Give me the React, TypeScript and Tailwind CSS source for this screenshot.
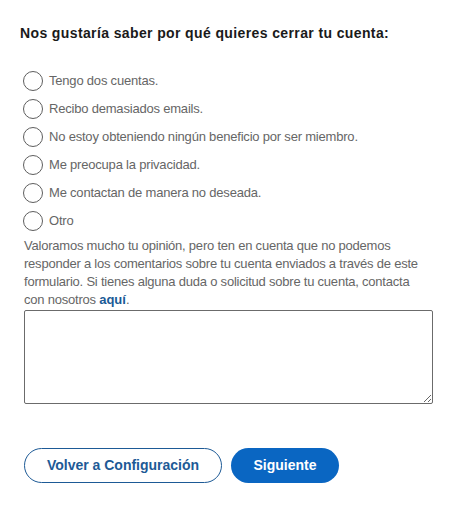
import React from "react";

const reasons = [
  "Tengo dos cuentas.",
  "Recibo demasiados emails.",
  "No estoy obteniendo ningún beneficio por ser miembro.",
  "Me preocupa la privacidad.",
  "Me contactan de manera no deseada.",
  "Otro",
];

export default function App() {
  return (
    <div className="w-[461px] h-[512px] bg-white font-['Liberation_Sans',Arial,sans-serif]">
      <div className="pl-[20px] pt-[24px]">
        <h1 className="text-[14px] leading-[18px] font-bold tracking-[0.38px] text-[#1a1a1a]">
          Nos gustaría saber por qué quieres cerrar tu cuenta:
        </h1>
      </div>
      <div className="pl-[23px] pt-[25px] flex flex-col">
        {reasons.map((r) => (
          <label key={r} className="flex items-center h-[28px] gap-[6px]">
            <span className="w-[20px] h-[20px] rounded-full border border-[#5e5e5e] bg-white shrink-0" />
            <span className="text-[13px] tracking-[-0.2px] text-[#666666]">{r}</span>
          </label>
        ))}
      </div>
      <div className="pl-[24px] pr-[28px] pt-[2px]">
        <p className="text-[13px] leading-[18px] tracking-[-0.22px] text-[#666666]">
          Valoramos mucho tu opinión, pero ten en cuenta que no podemos responder a los comentarios sobre tu cuenta enviados a través de este formulario. Si tienes alguna duda o solicitud sobre tu cuenta, contacta con nosotros{" "}
          <a className="font-bold tracking-normal text-[#1a5a96]">aquí</a>.
        </p>
        <textarea className="block mt-[1px] w-[409px] h-[94px] border border-[#6b6b6b] rounded-[2px] resize" />
      </div>
      <div className="pl-[24px] pt-[44px] flex gap-[9px]">
        <button className="h-[35px] w-[198px] rounded-full border border-[#1d5a96] text-[#1d5a96] text-[14px] font-bold bg-white">
          Volver a Configuración
        </button>
        <button className="h-[35px] w-[108px] rounded-full bg-[#0a66c2] text-white text-[14px] font-bold">
          Siguiente
        </button>
      </div>
    </div>
  );
}
